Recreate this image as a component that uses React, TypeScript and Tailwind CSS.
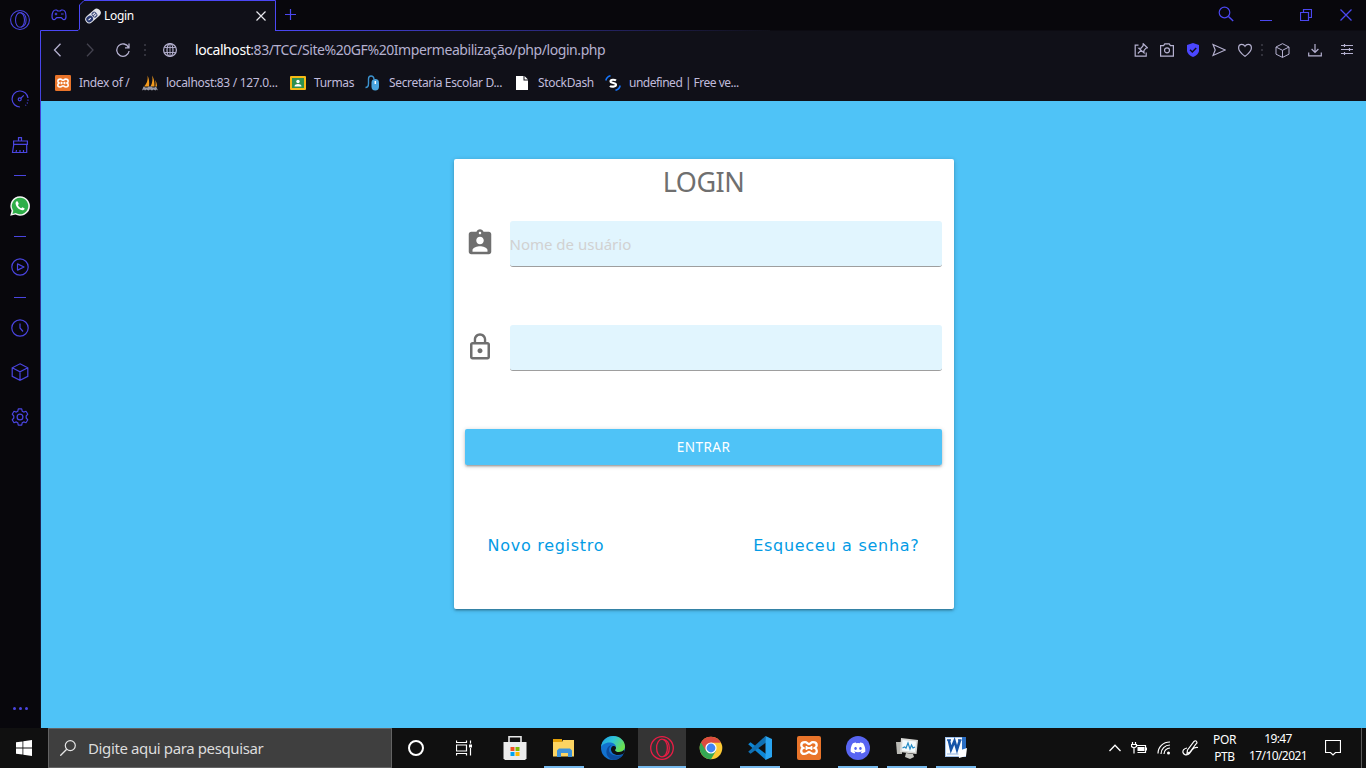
import React from "react";
import { MdAssignmentInd, MdLockOutline } from "react-icons/md";
import { FaDiscord } from "react-icons/fa";

type IconProps = { className?: string; children?: React.ReactNode; box?: string };

function Ico({ className = "", children, box = "0 0 18 18" }: IconProps) {
  return (
    <svg viewBox={box} className={`block shrink-0 ${className}`} fill="none" stroke="currentColor" strokeWidth="1.2">
      {children}
    </svg>
  );
}

function XamppGlyph() {
  return (
    <>
      <rect width="24" height="24" rx="2" fill="#e9742a" stroke="none" />
      <path
        d="M8 6.2c-2.300 0-3.700 1.400-3.700 3 0 1.200.8 2.200 1.900 2.800-1.200.5-2 1.600-2 2.900 0 1.800 1.500 3 3.300 3 2.700 0 3.300-1.900 4.500-1.900s1.800 1.900 4.500 1.900c1.800 0 3.300-1.200 3.300-3 0-1.300-.8-2.400-2-2.900 1.100-.6 1.900-1.600 1.900-2.800 0-1.600-1.400-3-3.700-3-2.300 0-2.600 1.800-4 1.800S10.300 6.200 8 6.200Z"
        stroke="#fff"
        strokeWidth="2.300"
      />
      <path d="M9 12h6M9.500 10v4M14.500 10v4" stroke="#fff" strokeWidth="1.800" />
    </>
  );
}

function OperaRing({ className }: { className: string }) {
  return (
    <Ico box="0 0 24 24" className={className}>
      <circle cx="12" cy="12" r="11.300" strokeWidth="1.300" />
      <ellipse cx="12" cy="12" rx="5.400" ry="8.800" strokeWidth="1.300" />
      <path d="M13 3.400c4.500.8 6.300 4.600 6.300 8.600s-1.800 7.800-6.300 8.600" strokeWidth="1.300" />
    </Ico>
  );
}

function Cube({ className }: { className: string }) {
  return (
    <Ico className={className}>
      <path d="M9 .8 16.800 4.800v8.600L9 17.300 1.200 13.400V4.800ZM1.200 4.800 9 8.800l7.800-4M9 8.800v8.500" />
    </Ico>
  );
}

function Sidebar() {
  return (
    <aside className="flex w-10 shrink-0 flex-col items-center bg-[#08070c] pr-px text-[#4a45e0]">
      <OperaRing className="mt-[10px] size-5" />
      <Ico className="mt-[60px] size-[18px]">
        <path d="M9 17A8 8 0 1 1 17 8" />
        <path d="M17 9.500v1.200M16.500 12.500l-.3 1M15 15l-.5.500" />
        <circle cx="8.700" cy="9.300" r="1.500" />
        <path d="m9.800 8.200 3-2.800" />
      </Ico>
      <Ico className="mt-7 size-[18px]">
        <path d="M7.500 5V1.600h3V5M2.600 5h13.800v3.400H2.600ZM2.800 8.400 1.500 16.500h14.200V8.400M5 16.500l.5-2.500M9 16.500V14M12.500 16.500V14" />
      </Ico>
      <div className="mt-[21px] ml-px h-px w-3 bg-current" />
      <Ico box="0 0 20 20" className="mt-5 ml-px size-5">
        <path d="M10 .2a9.800 9.800 0 1 1-4.600 18.400L.2 19.800l1.400-5A9.800 9.800 0 0 1 10 .2Z" fill="#f4f6f4" stroke="none" />
        <path d="M10 1.700a8.300 8.300 0 1 1-4.300 15.400l-3.300.8.9-3.200A8.300 8.300 0 0 1 10 1.700Z" fill="#2eae48" stroke="none" />
        <path
          d="M6.900 5.300c-.9.300-1.500 1.300-1.300 2.500.6 3.400 3.600 6.200 6.700 6.500 1.200.1 2.200-.8 2.400-1.800l-2.300-1.300-1.200 1.100c-1.500-.5-2.700-1.700-3.300-3.200l.9-1.100-1-2.500Z"
          fill="#fff"
          stroke="none"
        />
      </Ico>
      <div className="mt-5 ml-px h-px w-3 bg-current" />
      <Ico className="mt-[21px] size-[18px]">
        <circle cx="9" cy="9" r="8.200" />
        <path d="M6.500 5.900v6.200L13 9Z" strokeLinejoin="round" />
      </Ico>
      <div className="mt-[21px] ml-px h-px w-3 bg-current" />
      <Ico className="mt-[20.500px] size-[18px]">
        <circle cx="9" cy="9" r="8.200" />
        <path d="M9 4.500V9l3 3.500" />
      </Ico>
      <Cube className="mt-[26.500px] size-[18px]" />
      <Ico className="mt-[27px] size-[18px]">
        <circle cx="9" cy="9" r="2.900" />
        <path
          d="M7.300.8h3.400l.5 2.400 1.500.9 2.300-.8 1.800 2.900L15.200 8v2l1.600 1.800-1.800 2.900-2.300-.8-1.500.9-.5 2.400H7.300l-.5-2.400-1.500-.9-2.300.8-1.800-2.900L2.800 10V8L1.200 6.200 3 3.300l2.300.8 1.500-.9Z"
          strokeLinejoin="round"
        />
      </Ico>
      <div className="mt-auto mb-[18px] ml-px flex gap-[3px]">
        <i className="size-[3px] rounded-full bg-current" />
        <i className="size-[3px] rounded-full bg-current" />
        <i className="size-[3px] rounded-full bg-current" />
      </div>
    </aside>
  );
}

function TabStrip() {
  return (
    <div className="relative flex h-[31px] bg-[#08070c] text-[#4b47f0]">
      <svg className="absolute top-0 left-0 h-[31px] w-[1326px]" viewBox="0 0 1326 31" fill="none">
        <defs>
          <linearGradient id="edge" gradientUnits="userSpaceOnUse" x1="235" y1="0" x2="730" y2="0">
            <stop offset="0" stopColor="#4b47f5" />
            <stop offset="1" stopColor="#101018" />
          </linearGradient>
        </defs>
        <path d="M.5 31v-.5H38L39.500 29V5L44 .5h191.500v30H1326V31Z" fill="#101018" />
        <path d="M.5 31v-.5H38L39.500 29V5L44 .5h191.500v30" stroke="#4b47f5" />
        <path d="M235 30h495v1H235Z" fill="url(#edge)" />
      </svg>
      <div className="relative flex w-10 justify-center pt-[9px] pr-[2px]">
        <Ico box="0 0 16 12" className="h-3 w-4">
          <path d="M4.500 1h1.200l1 1h2.600l1-1h1.200C13.500 1 15 3.500 15 7.500c0 2-.8 3.200-2 3.200-1.500 0-1.800-2-3-2H6c-1.200 0-1.500 2-3 2-1.200 0-2-1.200-2-3.200C1 3.500 2.500 1 4.500 1Z" />
          <path d="M3.700 5h2.600M5 3.700v2.600M10 5h2.600" />
        </Ico>
      </div>
      <div className="relative flex w-[196px] items-center pl-[5px]">
        <Ico box="0 0 16 16" className="size-4">
          <g transform="rotate(-42 8 8)" stroke="none">
            <rect x="-1" y="4" width="18" height="8" rx="4" fill="#e2e4e9" />
            <rect x="0" y="5" width="7" height="6" rx="3" fill="#2a3a72" />
            <rect x="7.500" y="5" width="5" height="6" rx="2" fill="#46527f" />
            <path d="M2 8h3M8.500 7h3M8.500 9h3" stroke="#fff" strokeWidth="1" />
          </g>
        </Ico>
        <span className="ml-[3px] text-[12px] tracking-[-0.3px] text-white">Login</span>
        <Ico box="0 0 10 10" className="mr-[10px] ml-auto size-[10px] text-[#e8e8ee]">
          <path d="m.5.5 9 9M9.500.5l-9 9" />
        </Ico>
      </div>
      <Ico box="0 0 11 11" className="relative mt-[9px] ml-[9px] size-[11px]">
        <path d="M5.500 0v11M0 5.500h11" />
      </Ico>
      <div className="relative mr-[14px] ml-auto flex items-start gap-7 pt-[6px]">
        <Ico box="0 0 16 16" className="-mr-[2px] size-4">
          <circle cx="6.500" cy="6.500" r="5.300" />
          <path d="m10.500 10.500 4.700 4.500" strokeWidth="1.500" />
        </Ico>
        <div className="mt-[14px] h-px w-3 bg-current" />
        <Ico box="0 0 12 12" className="mt-[3px] size-3">
          <path d="M.5 3.500h8v8h-8ZM3.500 3.500v-3h8v8h-3" />
        </Ico>
        <Ico box="0 0 12 12" className="mt-[3px] size-3">
          <path d="m.5.5 11 11M11.500.5l-11 11" strokeWidth="1.300" />
        </Ico>
      </div>
    </div>
  );
}

function DotColumn({ className }: { className: string }) {
  return (
    <div className={`flex w-[2px] flex-col gap-[3px] text-[#32323c] ${className}`}>
      <i className="size-[2px] bg-current" />
      <i className="size-[2px] bg-current" />
      <i className="size-[2px] bg-current" />
    </div>
  );
}

function AddressBar() {
  return (
    <div className="flex h-[38px] items-center pr-[12px] pl-[11px] text-[#b5b1d0]">
      <Ico box="0 0 14 14" className="size-[14px]">
        <path d="M8.500.8 2.500 7l6 6.200" strokeWidth="1.300" />
      </Ico>
      <Ico box="0 0 14 14" className="ml-4 size-[14px] text-[#44434f]">
        <path d="M5 .8 11 7l-6 6.200" strokeWidth="1.300" />
      </Ico>
      <Ico box="0 0 14 14" className="ml-5 size-[14px]">
        <path d="M12.600 4.500A6.200 6.200 0 1 0 13.100 8M13 .5v4.300H9" strokeWidth="1.300" />
      </Ico>
      <DotColumn className="ml-[14px]" />
      <Ico box="0 0 14 14" className="ml-[17px] size-[14px]">
        <circle cx="7" cy="7" r="6.400" />
        <ellipse cx="7" cy="7" rx="3" ry="6.400" />
        <path d="M1.400 4.500h11.200M1.400 9.500h11.200M7 .5v13" strokeWidth=".9" />
      </Ico>
      <span className="-mt-px ml-[18px] text-[14px] tracking-[-0.430px] whitespace-nowrap">
        <span className="text-white">localhost</span>:83/TCC/Site%20GF%20Impermeabilização/php/login.php
      </span>
      <div className="ml-auto flex items-center">
        <Ico box="0 0 14 14" className="size-[14px]">
          <path d="M4.500 2.200H1.200v11h11V9.500" />
          <path d="m9.200.8 4.200 4-1.500.4-2 2.400.1 2.300L4.800 5.300l2.300-.2 2-2.400ZM7 7.400 3.800 10.500" />
        </Ico>
        <Ico box="0 0 14 14" className="ml-3 size-[14px]">
          <path d="M.6 2.600h3L4.800.8h4.400l1.200 1.800h3v10.600H.6Z" />
          <circle cx="7" cy="7.300" r="2.500" />
        </Ico>
        <Ico box="0 0 14 14" className="ml-3 size-[14px]">
          <path d="m7 0 6 1.900v5.300c0 3.500-3 5.500-6 6.800-3-1.300-6-3.300-6-6.800V1.900Z" fill="#4b47ff" stroke="none" />
          <path d="m4 6.700 2.300 2.300L10.200 5" stroke="#101018" strokeWidth="1.500" />
        </Ico>
        <Ico box="0 0 14 14" className="ml-3 size-[14px]">
          <path d="M1 1.500 13.300 7 1 12.500 3.200 7Z" />
        </Ico>
        <Ico box="0 0 14 14" className="ml-3 size-[14px]">
          <path d="M7 13.400C2.500 9.900.6 7.500.6 4.900.6 2.800 2 1.300 3.900 1.300c1.300 0 2.400.7 3.100 1.900.7-1.200 1.800-1.900 3.100-1.900 1.900 0 3.300 1.500 3.300 3.600 0 2.600-1.900 5-6.400 8.500Z" />
        </Ico>
        <DotColumn className="ml-[9px]" />
        <Cube className="ml-[12px] size-[15px]" />
        <Ico box="0 0 14 14" className="ml-[18px] size-[14px]">
          <path d="M7 1v8.500M3.600 6 7 9.500 10.400 6M.7 9.500v3.300h12.600V9.500" />
        </Ico>
        <Ico box="0 0 14 14" className="ml-[18px] size-[14px]">
          <path d="M1 2.500h12M1 6.500h12M1 10.500h12M4.500 1v3M9.500 5v3M4.500 9v3" />
        </Ico>
      </div>
    </div>
  );
}

function Bookmarks() {
  return (
    <div className="flex h-[32px] items-center gap-2 pb-1 pl-[14px] text-[12px] tracking-[-0.340px] whitespace-nowrap text-[#c0bcdc]">
      <Ico box="0 0 24 24" className="size-4">
        <XamppGlyph />
      </Ico>
      <span className="mr-1 w-[51px]">Index of /</span>
      <Ico box="0 0 16 16" className="size-4">
        <g stroke="none">
          <path d="M5.500.5C6 4 5.500 8 2 11.500h5C7.500 7 7 3 5.500.5ZM10 .5c1 3 .5 7.500-1.500 11h4C12.500 7 12 3 10 .5ZM13 5c.8 2 .8 4.500.3 6.500H15C15 9 14.500 7 13 5Z" fill="#f39a1c" />
          <path d="M0 15.500 1.500 11.500l2 1h2l1-1h3l1 1h2l1.500-1 2 4-1.500-1-1 1-2-1-1.500 1-2-1-1.500 1-2-1-1.500 1-1-1Z" fill="#9698a6" />
        </g>
      </Ico>
      <span className="mr-1 w-[112px] tracking-[-0.310px]">localhost:83 / 127.0...</span>
      <Ico box="0 0 16 16" className="size-4">
        <g stroke="none">
          <rect y="1" width="16" height="14" rx="1" fill="#f5ba15" />
          <rect x="2" y="3" width="12" height="10" fill="#2f9150" />
          <circle cx="8" cy="6.500" r="1.700" fill="#fff" />
          <path d="M4.500 11.500c0-2 2-2.600 3.500-2.600s3.500.6 3.500 2.600Z" fill="#fff" />
        </g>
      </Ico>
      <span className="mr-1 w-[39px]">Turmas</span>
      <Ico box="0 0 16 16" className="size-4">
        <path d="M.5 12.500c2.500 0 3-1.500 3-4V4c0-4 5-4 5.500 0" stroke="#3c93cf" strokeWidth="1.400" />
        <rect x="6.500" y="4" width="7.500" height="11.500" rx="3.700" fill="#4aa4df" stroke="none" />
        <path d="M10.300 6v3" stroke="#fff" strokeWidth="1.500" />
      </Ico>
      <span className="mr-1 w-[113px]">Secretaria Escolar D...</span>
      <Ico box="0 0 16 16" className="size-4">
        <path d="M2 1h7.500v4.500H14V15H2ZM10.500 1 14 4.500h-3.500Z" fill="#fff" stroke="none" />
      </Ico>
      <span className="mr-1 w-[55px]">StockDash</span>
      <Ico box="0 0 16 16" className="size-4">
        <path d="M.8 5.500C1.300 3 3 1.300 5.500.7M10.500 15.300c2.500-.6 4.200-2.300 4.700-4.800" stroke="#1677ff" strokeWidth="1.500" />
        <path d="M11 5.500C10 4.600 5.500 4 5.500 6.300S11 7.500 11 9.800 6 12 5 10.800" stroke="#fff" strokeWidth="2.100" />
      </Ico>
      <span className="tracking-[-0.500px]">undefined | Free ve...</span>
    </div>
  );
}

function LoginCard() {
  return (
    <main className="flex flex-1 justify-center bg-[#4fc3f7]">
      <form className="mt-[58px] flex h-[450px] w-[500px] flex-col rounded-[2px] bg-white px-3 shadow-[0_2px_2px_0_rgba(0,0,0,0.14),0_3px_1px_-2px_rgba(0,0,0,0.12),0_1px_5px_0_rgba(0,0,0,0.2)]">
        <h1 className="mt-[2px] h-[42px] text-center text-[27px] leading-[42px] tracking-[-0.5px] text-[#6f6f6f]">LOGIN</h1>
        <div className="mt-[18px] flex h-[46px] items-center">
          <MdAssignmentInd className="mr-[15px] -ml-px size-[30px] shrink-0 -translate-y-px text-[#6f6f6f]" />
          <div className="flex h-[46px] w-[432px] shrink-0 items-center rounded-[3px] border-b border-[#9e9e9e] bg-[#e1f5fe] pt-[2px] text-[15px] text-[#d1d1d1]">
            Nome de usuário
          </div>
        </div>
        <div className="mt-[58px] flex h-[46px] items-center">
          <MdLockOutline className="mr-[15px] -ml-px size-[30px] shrink-0 -translate-y-px text-[#6f6f6f]" />
          <div className="h-[46px] w-[432px] shrink-0 rounded-[3px] border-b border-[#9e9e9e] bg-[#e1f5fe]" />
        </div>
        <button
          type="button"
          className="mt-[58px] -ml-px h-9 w-[477px] rounded-[2px] bg-[#4fc3f7] pl-px text-[13.500px] tracking-[0.5px] text-white shadow-[0_2px_2px_0_rgba(0,0,0,0.14),0_3px_1px_-2px_rgba(0,0,0,0.12),0_1px_5px_0_rgba(0,0,0,0.2)]"
        >
          ENTRAR
        </button>
        <div className="mt-[67px] flex justify-between pr-[22px] pl-[22px] font-['DejaVu_Sans',sans-serif] text-[16px] leading-7 tracking-[0.720px] text-[#039be5]">
          <a>Novo registro</a>
          <a>Esqueceu a senha?</a>
        </div>
      </form>
    </main>
  );
}

function Slot({ children, open = false, active = false }: { children: React.ReactNode; open?: boolean; active?: boolean }) {
  return (
    <div className={`flex h-10 flex-col items-center ${active ? "ml-px w-12 bg-[#343434]" : "w-[49px]"}`}>
      <div className="flex h-[38px] items-center pt-[2px]">{children}</div>
      {open && <div className={`h-[2px] bg-[#76b9ed] ${active ? "w-full" : "w-10"}`} />}
    </div>
  );
}

function Taskbar() {
  return (
    <footer className="flex h-10 bg-[#101010] text-white">
      <div className="flex w-12 items-center justify-center">
        <Ico box="0 0 16 16" className="size-4">
          <path d="M0 2.300 6.500 1.400v6.200H0ZM7.300 1.300 16 0v7.600H7.300ZM0 8.400h6.500v6.200L0 13.700ZM7.300 8.400H16V16l-8.700-1.300Z" fill="#fff" stroke="none" />
        </Ico>
      </div>
      <div className="flex w-[344px] items-center border border-[#636363] bg-[#3f3f3f] pl-[11px]">
        <Ico box="0 0 16 16" className="size-4 text-[#e6e6e6]">
          <circle cx="10.300" cy="5.600" r="5" />
          <path d="M6.700 9.200.3 15.700" strokeWidth="1.300" />
        </Ico>
        <span className="ml-3 text-[15px] tracking-[-0.380px] text-[#dcdcdc]">Digite aqui para pesquisar</span>
      </div>
      <div className="flex w-12 items-center justify-center">
        <div className="size-4 rounded-full border-[2.500px] border-white" />
      </div>
      <div className="flex w-[50px] items-center justify-center pr-[2px]">
        <Ico box="0 0 16 16" className="size-4">
          <path d="M.5.500v2h10v-2M.5 5h10v6H.5ZM.5 15.500v-2h10v2M14.500.5v3M14.500 8v7.500" />
          <rect x="13" y="4.500" width="3" height="3" fill="#fff" stroke="none" />
        </Ico>
      </div>
      <Slot>
        <Ico box="0 0 24 24" className="size-6">
          <path d="M6 7V.8h12V7" stroke="#e8e8e8" strokeWidth="1.600" />
          <path d="M.5 6h23v16.500L22 24H2L.5 22.500Z" fill="#ececec" stroke="none" />
          <path d="M7.500 11h4v4h-4Z" fill="#f25022" stroke="none" />
          <path d="M12.500 11h4v4h-4Z" fill="#7fba00" stroke="none" />
          <path d="M7.500 16h4v4h-4Z" fill="#00a4ef" stroke="none" />
          <path d="M12.500 16h4v4h-4Z" fill="#ffb900" stroke="none" />
        </Ico>
      </Slot>
      <Slot open>
        <Ico box="0 0 24 24" className="size-6">
          <g stroke="none">
            <path d="M1 3h9v3h12v6H1Z" fill="#e3a008" />
            <path d="M1 6h9l1-2h11v16.500H1Z" fill="#fcd462" />
            <path d="M5 21v-6.500L7 12.500h11l2 2V21h-4v-4H9v4Z" fill="#3f93d9" />
          </g>
        </Ico>
      </Slot>
      <Slot>
        <Ico box="0 0 24 24" className="size-6">
          <defs>
            <linearGradient id="edgeTop" x1="0" y1="0" x2="1" y2="0.500">
              <stop offset="0" stopColor="#1b9de2" />
              <stop offset=".5" stopColor="#2fc4d8" />
              <stop offset="1" stopColor="#6be04f" />
            </linearGradient>
          </defs>
          <g stroke="none">
            <circle cx="12" cy="12" r="12" fill="#1272cf" />
            <path d="M0 11C1 4 6 0 12 0c7 0 12 5 12 10.500 0 3.500-2.700 5.500-6 5.500-2.500 0-4-1-4-1.800 0-.7 1-1.200 1-3C15 8.500 12 6.500 8.500 6.500 4 6.500 1 9 0 11Z" fill="url(#edgeTop)" />
            <path d="M8 14c0-2.500 1.200-4 3-5-3.500.3-6 4-5.500 8 .5 4 3.500 6.600 7.500 6.900 3.500 0 7.500-2.400 9.300-5.400-1.600.8-3.200 1.200-5.300 1.200-4.500 0-9-1.700-9-5.700Z" fill="#0c4c9e" />
            <path d="M12 10c1.800 0 3 .6 3 1.900 0 1.200-1 1.600-1 2.300 0 .8 1.500 1.800 4 1.800 2 0 3.800-.7 5-2l.8 1.200-1.600 2.700c-1.700.8-3.500 1.100-5.200 1.100-4 0-7-2.500-7-5.800 0-1.400.8-2.600 2-3.200Z" fill="#101010" />
          </g>
        </Ico>
      </Slot>
      <Slot open active>
        <OperaRing className="size-6 text-[#e81d45]" />
      </Slot>
      <Slot>
        <Ico box="0 0 24 24" className="size-6">
          <g stroke="none">
            <circle cx="12" cy="12" r="11.300" fill="#fcc934" />
            <path d="M12 12 2.040 6.250A11.500 11.500 0 0 0 12 23.300l5-8.500Z" fill="#34a853" />
            <path d="M2.040 6.500A11.300 11.300 0 0 1 21.960 6.700H12L7 15Z" fill="#dd4b3e" />
            <circle cx="12" cy="12" r="5.600" fill="#fff" />
            <circle cx="12" cy="12" r="4.400" fill="#4285f4" />
          </g>
        </Ico>
      </Slot>
      <Slot open>
        <Ico box="0 0 24 24" className="size-6">
          <g stroke="none">
            <path d="M.2 8.200 2.500 6.200 18 18v6Z" fill="#0e86d4" />
            <path d="M17.500 0 18 6.500 2.500 17.800.2 15.700Z" fill="#1070b3" />
            <path d="M17.500 0 24 3v18l-6.500 3Z" fill="#29a4f0" />
          </g>
        </Ico>
      </Slot>
      <Slot>
        <Ico box="0 0 24 24" className="size-6">
          <XamppGlyph />
        </Ico>
      </Slot>
      <Slot open>
        <div className="flex size-6 items-center justify-center rounded-full bg-[#5865f2]">
          <FaDiscord className="size-4" />
        </div>
      </Slot>
      <Slot open>
        <Ico box="0 0 24 24" className="size-6">
          <g stroke="none">
            <path d="M1 6h6v12H2Z" fill="#b9b9b4" />
            <path d="m6 2 17 2-1.500 14L5 16Z" fill="#d9d9d6" />
            <path d="m7.500 4 13.500 1.500L20 16 7 14.500Z" fill="#f4fafc" />
            <path d="m11 17 7 1 1 3-4 2-5-2Z" fill="#c6c6c2" />
          </g>
          <path d="m7.500 12 2-1 1.500 1 2-5 2 6 1.500-4 1.500 3 2-1" stroke="#258bc5" />
        </Ico>
      </Slot>
      <Slot open>
        <Ico box="0 0 24 24" className="size-6">
          <g stroke="none">
            <path d="M1 1h21v20H1Z" fill="#9fc0ea" />
            <path d="M2 2h16v18H2Z" fill="#f7fbff" />
            <path d="M18 1h4v14h-4Z" fill="#2b6fc4" />
            <path d="M3 17h12v2H3Z" fill="#c3d6ef" />
            <path d="m14 15 9-3-1 8-7 2Z" fill="#fff" />
          </g>
          <path d="m4.800 4 2.200 9.500L10.500 5l2.500 8.500L16 4" stroke="#1554a8" strokeWidth="2.600" />
          <path d="M3 4h4M14 4h3.500" stroke="#1554a8" strokeWidth="1.400" />
        </Ico>
      </Slot>
      <div className="ml-auto flex items-center">
        <Ico box="0 0 12 8" className="h-2 w-3">
          <path d="M.5 7 6 1.200 11.500 7" strokeWidth="1.300" />
        </Ico>
        <Ico box="0 0 16 12" className="ml-[10px] h-3 w-4">
          <path d="M5.500 3.500h9v7h-8M15.500 5.500v3M1.500 0v2.500M4.500 0v2.500M.5 2.500h5v2L3 6 .5 4.500ZM3 6v5.500" />
          <path d="M6.500 5h7v4h-7Z" fill="#fff" stroke="none" />
        </Ico>
        <Ico box="0 0 14 14" className="ml-[10px] size-[14px]">
          <path d="M1 12.500C1 6 6 1 13 1M4 13C4 8 8 4 13 4M7 13c0-3.500 3-6 6-6" />
          <circle cx="11.500" cy="12" r="1.500" fill="#fff" stroke="none" />
        </Ico>
        <Ico box="0 0 17 16" className="ml-[11px] h-4 w-[17px]">
          <path d="M5.500 10 12 1.500q1.500-1.500 2.500 0T14 4L8 12l-3 1.500ZM5 8C2 8.500.5 10.500 1 12.500s3 3 5 2 3-3 4-4.500 3-3 6-2.500" />
        </Ico>
        <div className="ml-[12px] flex w-[27px] flex-col items-center pb-px text-[12px] leading-[17px] tracking-[-0.400px]">
          <span>POR</span>
          <span>PTB</span>
        </div>
        <div className="ml-[9px] flex w-[62px] flex-col items-center pb-[3px] text-[12px] leading-[17px] tracking-[-0.600px]">
          <span>19:47</span>
          <span>17/10/2021</span>
        </div>
        <Ico box="0 0 16 16" className="mr-5 ml-[16px] size-4">
          <path d="M.5.500h15v12h-5L8 15l-2.500-2.500h-5Z" />
        </Ico>
        <div className="mr-1 h-10 w-px bg-[#5a5a5a]" />
      </div>
    </footer>
  );
}

export default function App() {
  return (
    <div className="flex h-[768px] w-[1366px] flex-col overflow-hidden bg-[#101018] font-['Noto_Sans',sans-serif]">
      <div className="flex h-[728px]">
        <Sidebar />
        <div className="flex w-[1326px] flex-col">
          <TabStrip />
          <div className="flex flex-1">
            <div className="w-px bg-linear-to-b from-[#4b47f5] to-[#101018]" />
            <div className="flex flex-1 flex-col">
              <AddressBar />
              <Bookmarks />
              <LoginCard />
            </div>
          </div>
        </div>
      </div>
      <Taskbar />
    </div>
  );
}
